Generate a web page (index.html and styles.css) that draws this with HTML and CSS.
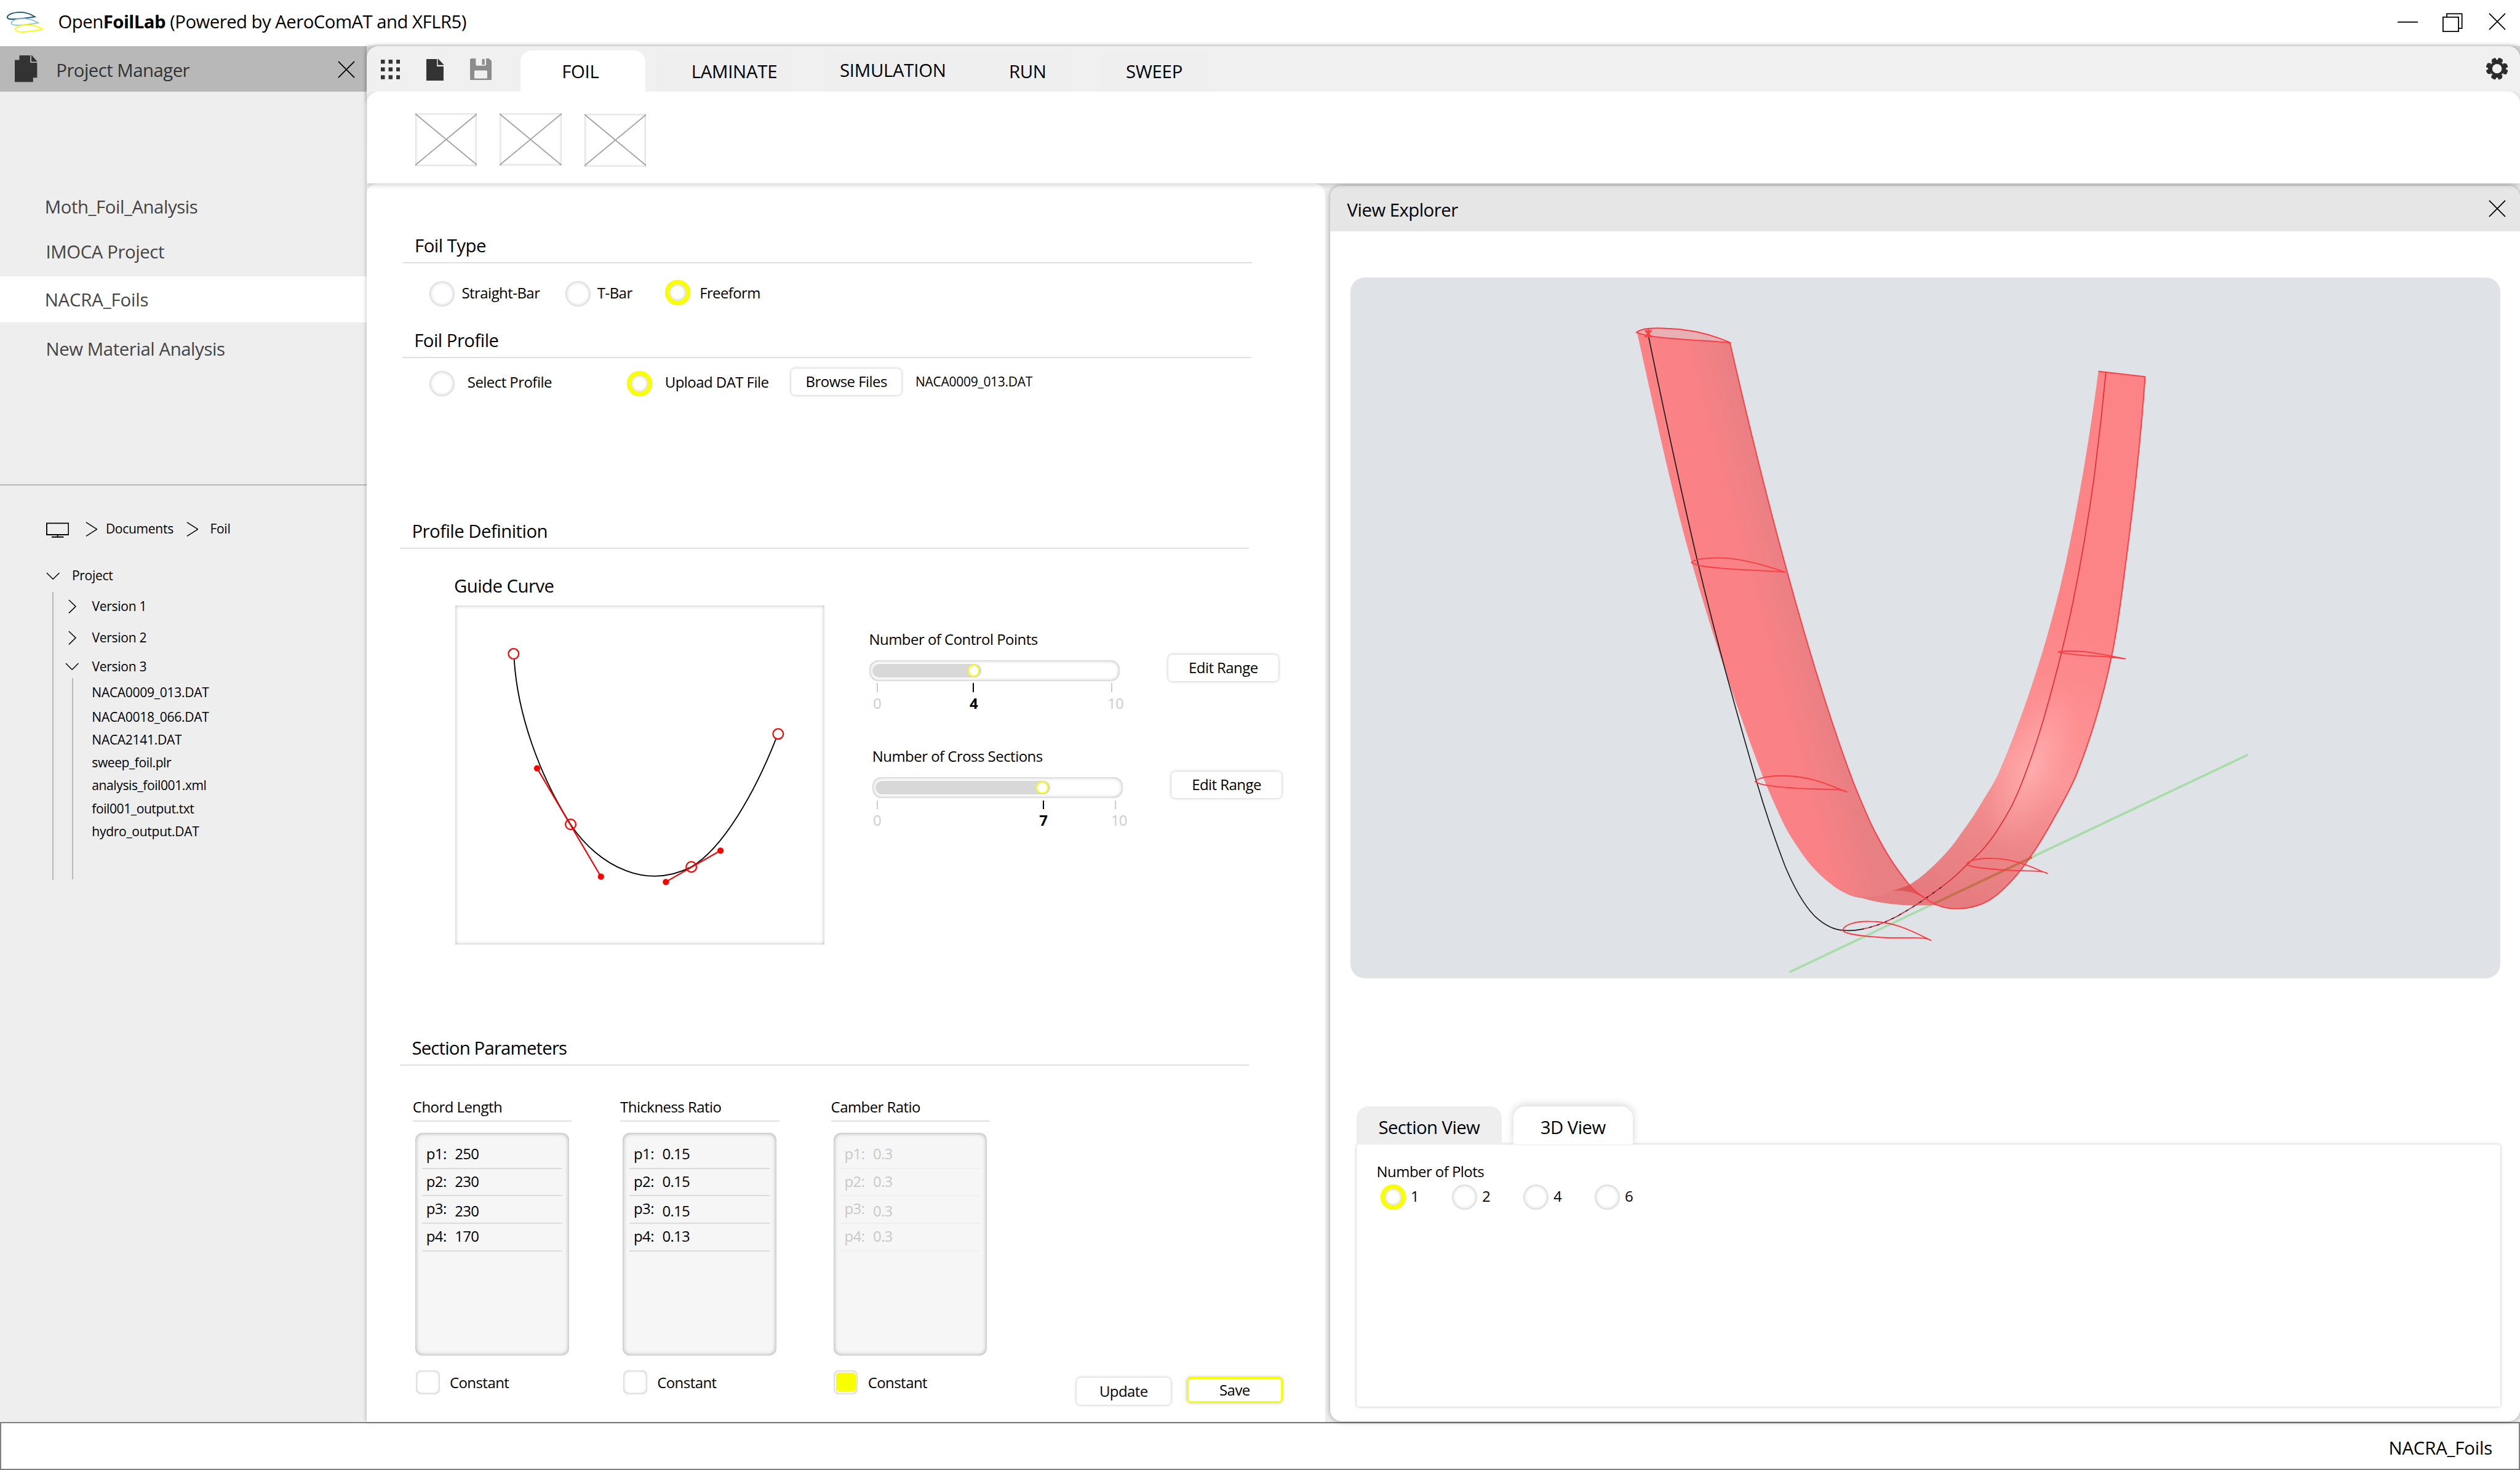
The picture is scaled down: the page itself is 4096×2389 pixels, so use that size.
FILE: index.html
```html
<!DOCTYPE html>
<html lang="en">
<head>
<meta charset="utf-8">
<title>OpenFoilLab</title>
<link rel="stylesheet" href="styles.css">
</head>
<body>
<div class="window">
  <header class="titlebar">
    <svg class="logo" viewBox="0 0 66 38" fill="none" stroke-width="2">
      <path stroke="#0f5078" d="M50 9C41 3 34 1 25 1C12 1 2 5 2 10C3 15 16 13 25 12C35 11 43 10 50 9Z"/>
      <path stroke="#8cc3cf" d="M56 19.500C47 14 40 12 31 12C19 12 9 15 9 20C10 25 22 24 31 23C41 22 49 21 56 19.500Z"/>
      <path stroke="#faff00" d="M63 30.500C54 25 47 23 38 23C26 23 16 26 16 31C17 36 29 36 38 34.500C48 33 56 33 63 30.500Z"/>
    </svg>
    <h1 class="app-name">Open<b>FoilLab</b> (Powered by AeroComAT and XFLR5)</h1>
    <div class="window-controls">
      <svg class="ctl ctl-min" viewBox="0 0 36 36"><path d="M0 18H36"/></svg>
      <svg class="ctl ctl-restore" viewBox="0 0 36 36"><path d="M1 8.500H28V33.500H1ZM7.500 8V2.500H34V28H28.500"/></svg>
      <svg class="ctl ctl-close" viewBox="0 0 30 30"><path d="M1 1L29 29M29 1L1 29"/></svg>
    </div>
  </header>

  <div class="workspace">
    <aside class="sidebar">
      <div class="sidebar-head">
        <svg class="pages-icon" viewBox="0 0 39 48"><path fill="#333" d="M0 9H8V1H27V14H39V40H32V47.500H0ZM29 0L39.500 12H29Z"/></svg>
        <span class="sidebar-title">Project Manager</span>
        <svg class="ctl sidebar-close" viewBox="0 0 30 30"><path d="M1 1L29 29M29 1L1 29"/></svg>
      </div>
      <nav class="projects">
        <a class="project">Moth_Foil_Analysis</a>
        <a class="project inset">IMOCA Project</a>
        <a class="project active">NACRA_Foils</a>
        <a class="project inset last">New Material Analysis</a>
      </nav>
      <div class="files">
        <div class="breadcrumb">
          <svg class="monitor" viewBox="0 0 40 27"><path d="M1 1.500H39V21.500H1ZM20 22V25M9.500 25.500H30.500"/></svg>
          <svg class="crumb-arrow" viewBox="0 0 21 26"><path d="M1 1L20 13L1 25"/></svg>
          <span class="crumb">Documents</span>
          <svg class="crumb-arrow flush" viewBox="0 0 21 26"><path d="M1 1L20 13L1 25"/></svg>
          <span class="crumb last">Foil</span>
        </div>
        <div class="tree-root">
          <svg class="arrow-down" viewBox="0 0 24 13"><path d="M1 1L12 12L23 1"/></svg>
          <span>Project</span>
        </div>
        <div class="tree">
          <div class="branch"><span class="toggle"><svg class="arrow-right" viewBox="0 0 14 25"><path d="M1 1L13 12.500L1 24"/></svg></span>Version 1</div>
          <div class="branch second"><span class="toggle"><svg class="arrow-right" viewBox="0 0 14 25"><path d="M1 1L13 12.500L1 24"/></svg></span>Version 2</div>
          <div class="branch third"><span class="toggle"><svg class="arrow-down" viewBox="0 0 24 13"><path d="M1 1L12 12L23 1"/></svg></span>Version 3</div>
          <div class="leaves">
            <div class="leaf first">NACA0009_013.DAT</div>
            <div class="leaf">NACA0018_066.DAT</div>
            <div class="leaf">NACA2141.DAT</div>
            <div class="leaf lower">sweep_foil.plr</div>
            <div class="leaf lower">analysis_foil001.xml</div>
            <div class="leaf lower">foil001_output.txt</div>
            <div class="leaf">hydro_output.DAT</div>
          </div>
        </div>
      </div>
    </aside>

    <main class="main">
      <div class="tabstrip">
        <svg class="dots" viewBox="0 0 34 34" fill="#333"><path d="M0 0h7v7H0zM13.500 0h7v7h-7zM27 0h7v7h-7zM0 13.500h7v7H0zM13.500 13.500h7v7h-7zM27 13.500h7v7h-7zM0 27h7v7H0zM13.500 27h7v7h-7zM27 27h7v7h-7z"/></svg>
        <svg class="page-icon" viewBox="0 0 31 39"><path fill="#333" d="M0 1H18.500V14H30V39H0ZM20 0L31 11.500H20Z"/></svg>
        <svg class="save-icon" viewBox="0 0 38 38"><path fill="#8c8c8c" fill-rule="evenodd" d="M2 0H10V10.500Q10 12.500 12 12.500H26Q28 12.500 28 10.500V0H33L38 5V36Q38 38 36 38H2Q0 38 0 36V2Q0 0 2 0ZM9 21Q7.500 21 7.500 23V33.500Q7.500 35 9 35H28.500Q30 35 30 33.500V23Q30 21 28.500 21ZM21 1H25.500V11H21Z"/></svg>
        <div class="tab tab-foil">FOIL</div>
        <div class="tab tab-laminate">LAMINATE</div>
        <div class="tab tab-simulation">SIMULATION</div>
        <div class="tab tab-run">RUN</div>
        <div class="tab tab-sweep">SWEEP</div>
        <svg class="gear" viewBox="-20 -20 40 40"><g fill="#2b2b2b"><circle r="13"/><path d="M-9 -16Q-6 -19 -2.800 -19L-1 -15.500H1L2.800 -19Q6 -19 10 -16L9.500 -11L-9.500 -11Z"/><path d="M-9 -16Q-6 -19 -2.800 -19L-1 -15.500H1L2.800 -19Q6 -19 10 -16L9.500 -11L-9.500 -11Z" transform="rotate(90)"/><path d="M-9 -16Q-6 -19 -2.800 -19L-1 -15.500H1L2.800 -19Q6 -19 10 -16L9.500 -11L-9.500 -11Z" transform="rotate(180)"/><path d="M-9 -16Q-6 -19 -2.800 -19L-1 -15.500H1L2.800 -19Q6 -19 10 -16L9.500 -11L-9.500 -11Z" transform="rotate(270)"/></g><circle r="8.300" fill="#f0f0f0"/></svg>
      </div>
      <div class="ribbon">
        <div class="tool"><svg viewBox="0 0 108 92" preserveAspectRatio="none"><path d="M0 1L108 91M108 1L0 91"/></svg></div>
        <div class="tool up"><svg viewBox="0 0 108 92" preserveAspectRatio="none"><path d="M0 1L108 91M108 1L0 91"/></svg></div>
        <div class="tool down"><svg viewBox="0 0 108 92" preserveAspectRatio="none"><path d="M0 1L108 91M108 1L0 91"/></svg></div>
      </div>

      <div class="panes">
        <section class="editor">
          <h2 class="heading foil-type">Foil Type</h2>
          <div class="options types">
            <label class="option straight"><i class="radio"></i>Straight-Bar</label>
            <label class="option tbar"><i class="radio"></i>T-Bar</label>
            <label class="option freeform"><i class="radio on"></i>Freeform</label>
          </div>
          <h2 class="heading foil-profile">Foil Profile</h2>
          <div class="options sources">
            <label class="option select"><i class="radio"></i>Select Profile</label>
            <label class="option upload"><i class="radio on"></i>Upload DAT File</label>
            <button class="btn browse">Browse Files</button>
            <span class="filename">NACA0009_013.DAT</span>
          </div>

          <h2 class="heading definition">Profile Definition</h2>
          <div class="profile">
            <figure class="guide">
              <figcaption>Guide Curve</figcaption>
              <div class="plot">
                <svg viewBox="794.300 1056 643.700 592" fill="none">
                  <path stroke="#000" stroke-width="2" d="M897 1150C903 1245 940 1350 995.500 1438C1045 1512 1128 1552 1206 1512C1262 1479 1318 1380 1354 1288"/>
                  <g stroke="#f00" stroke-width="2.400">
                    <path d="M937 1340L1048.400 1529M1161.700 1538L1257 1483.500"/>
                    <circle cx="896" cy="1140.300" r="9"/><circle cx="1357.500" cy="1280" r="9"/>
                    <circle cx="995.500" cy="1437.700" r="9"/><circle cx="1206" cy="1512" r="9"/>
                  </g>
                  <g fill="#f00">
                    <circle cx="937" cy="1340" r="5.500"/><circle cx="1048.400" cy="1529" r="5.500"/>
                    <circle cx="1161.700" cy="1538.200" r="5.500"/><circle cx="1257" cy="1483.500" r="5.500"/>
                  </g>
                </svg>
              </div>
            </figure>
            <div class="sliders">
              <div class="slider-row">
                <div class="slider control-points">
                  <div class="slider-label">Number of Control Points</div>
                  <div class="track"><div class="fill"><i class="knob"></i></div></div>
                  <div class="scale"><span class="mark zero">0</span><span class="mark current">4</span><span class="mark max">10</span></div>
                </div>
                <button class="btn edit">Edit Range</button>
              </div>
              <div class="slider-row shifted">
                <div class="slider cross-sections">
                  <div class="slider-label">Number of Cross Sections</div>
                  <div class="track"><div class="fill"><i class="knob"></i></div></div>
                  <div class="scale"><span class="mark zero">0</span><span class="mark current">7</span><span class="mark max">10</span></div>
                </div>
                <button class="btn edit">Edit Range</button>
              </div>
            </div>
          </div>

          <h2 class="heading parameters">Section Parameters</h2>
          <div class="params">
            <div class="param chord">
              <h3>Chord Length</h3>
              <div class="list">
                <div class="row"><span>p1:</span><b>250</b></div>
                <div class="row"><span>p2:</span><b>230</b></div>
                <div class="row"><span>p3:</span><b class="low">230</b></div>
                <div class="row"><span>p4:</span><b>170</b></div>
              </div>
              <label class="constant"><i class="check"></i>Constant</label>
            </div>
            <div class="param thickness">
              <h3>Thickness Ratio</h3>
              <div class="list">
                <div class="row"><span>p1:</span><b>0.15</b></div>
                <div class="row"><span>p2:</span><b>0.15</b></div>
                <div class="row"><span>p3:</span><b class="low">0.15</b></div>
                <div class="row"><span>p4:</span><b>0.13</b></div>
              </div>
              <label class="constant"><i class="check"></i>Constant</label>
            </div>
            <div class="param camber">
              <h3>Camber Ratio</h3>
              <div class="list disabled">
                <div class="row"><span>p1:</span><b>0.3</b></div>
                <div class="row"><span>p2:</span><b>0.3</b></div>
                <div class="row"><span>p3:</span><b class="low">0.3</b></div>
                <div class="row"><span>p4:</span><b>0.3</b></div>
              </div>
              <label class="constant"><i class="check on"></i>Constant</label>
            </div>
            <div class="actions">
              <button class="btn update">Update</button>
              <button class="btn save">Save</button>
            </div>
          </div>
        </section>

        <section class="explorer">
          <header class="explorer-head">
            <h2>View Explorer</h2>
            <svg class="ctl ctl-close" viewBox="0 0 30 30"><path d="M1 1L29 29M29 1L1 29"/></svg>
          </header>
          <div class="viewport">
            <svg viewBox="2356 484 2006 1222" fill="none">
              <defs>
                <linearGradient id="bladeLeft" gradientUnits="userSpaceOnUse" x1="2856" y1="580" x2="3008" y2="538">
                  <stop offset="0" stop-color="#fb8185"/><stop offset=".45" stop-color="#f98286"/><stop offset="1" stop-color="#e77f83"/>
                </linearGradient>
                <linearGradient id="bladeRight" gradientUnits="userSpaceOnUse" x1="3640" y1="1080" x2="3440" y2="1585">
                  <stop offset="0" stop-color="#fc8386"/><stop offset=".3" stop-color="#fd8e91"/><stop offset=".52" stop-color="#fb9799"/><stop offset=".74" stop-color="#ee888b"/><stop offset="1" stop-color="#e57b7f"/>
                </linearGradient>
                <radialGradient id="shine" gradientUnits="userSpaceOnUse" cx="0" cy="0" r="1" gradientTransform="translate(3545 1338) rotate(-68) scale(150 60)">
                  <stop offset="0" stop-color="#ffb0b2" stop-opacity=".85"/><stop offset="1" stop-color="#ffa5a7" stop-opacity="0"/>
                </radialGradient>
                <path id="right" d="M3660.800 647.700L3742.300 657C3735 761 3723.500 866 3710 970C3702 1029 3696 1088 3683.500 1146C3669 1214 3650 1282 3622.800 1350C3612 1377 3597 1402 3581.600 1430C3571 1449 3559 1470 3545 1490C3531 1511 3517 1530 3499 1547C3484 1562 3469 1574 3450.800 1579C3438 1583 3425 1585.500 3412 1585C3400 1584 3390 1582 3378 1578.700C3350 1579 3330 1580 3315 1578.300C3290 1576 3270 1573 3250 1567L3227.800 1561.700C3262 1568 3280 1563 3300 1554C3314 1550 3322 1547 3332 1542.700C3341 1537 3350 1531 3358.700 1523.300C3379 1505 3397 1487 3412 1466.700C3426 1447 3441 1427 3453 1406.700C3464 1388 3476 1371 3486 1350C3516 1281 3541.500 1208 3563.200 1137C3578 1088 3592 1035 3603.300 984.300C3627 874 3646 760 3660.800 647.700Z"/>
              </defs>
              <path stroke="#a8dca8" stroke-width="4" d="M3122 1695.500L3921.500 1316.500"/>
              <path fill="url(#bladeLeft)" d="M2856 580L3018 598C3048.600 731 3081 865 3118 998C3150 1115 3184.700 1233 3227.800 1350C3238 1378 3250 1405 3261.700 1431.700C3270 1450 3280 1468 3290.800 1486.700C3303 1507 3316 1525 3329.600 1541.700C3340 1555 3350 1561 3358.700 1566.700C3338 1563 3322 1550 3300 1554C3280 1566 3250 1570 3227.800 1561.700C3212 1555 3203 1549 3193.900 1541.700C3170 1523 3152 1503 3138 1480C3122 1458 3111 1437 3100.800 1413.300C3091 1392 3082 1371 3073.700 1350C3027 1227 2986 1103 2951 980C2913 846 2886 713 2856 580Z"/>
              <use href="#right" fill="url(#bladeRight)"/>
              <use href="#right" fill="url(#shine)"/>
              <path fill="#dc5558" d="M3300 1554C3314 1550 3322 1547 3332 1542.700C3340 1552 3348 1560 3358.700 1567C3340 1558 3330 1552 3300 1554Z"/>
              <path stroke="#c2714a" stroke-width="4" d="M3374 1576L3545 1495"/>
              <path stroke="#1a1a1a" stroke-width="1.800" d="M2876 586.700C2903 718 2931 849 2961.700 980C2991 1103 3025 1227 3060.600 1350C3077 1407 3094 1458 3113.900 1510C3131 1551 3148 1579 3165 1597C3180 1611 3196 1622 3215.700 1622.500C3227 1624 3237 1623 3247 1621"/>
              <path stroke="#d93038" stroke-width="1.800" d="M3247 1621C3262 1618 3276 1614 3288.400 1608.300C3299 1603 3307 1600 3315 1595C3332 1585 3346 1577 3358.700 1567.300C3370 1560 3380 1552 3387.800 1546.700C3405 1534 3419 1521 3431.400 1508.300C3443 1498 3452 1490 3460.500 1480C3472 1467 3481 1454 3489.500 1440C3498 1427 3503 1418 3509 1406.700C3518 1389 3526 1370 3533 1350C3544 1321 3554 1292 3563 1261.700C3583.500 1191 3602 1120 3616.700 1049C3631 978 3643 907 3652.800 836C3661 773 3668 711 3674 648"/>
              <path stroke="#222" stroke-width="1.600" stroke-dasharray="5 9" d="M3247 1621C3262 1618 3276 1614 3288.400 1608.300C3299 1603 3307 1600 3315 1595C3332 1585 3346 1577 3358.700 1567.300C3370 1560 3380 1552 3387.800 1546.700"/>
              <g stroke="#fb3c41" stroke-width="2" stroke-linejoin="round">
                <path d="M3018 598C3048.600 731 3081 865 3118 998C3150 1115 3184.700 1233 3227.800 1350C3238 1378 3250 1405 3261.700 1431.700C3270 1450 3280 1468 3290.800 1486.700C3303 1507 3316 1525 3329.600 1541.700C3340 1555 3350 1561 3358.700 1566.700C3367 1573 3375 1577 3382.900 1580C3393 1584 3402 1585 3412 1585C3425 1585.500 3438 1583 3450.800 1579C3469 1574 3484 1562 3499 1547C3517 1530 3531 1511 3545 1490C3559 1470 3571 1449 3581.600 1430C3597 1402 3612 1377 3622.800 1350C3650 1282 3669 1214 3683.500 1146C3696 1088 3702 1029 3710 970C3723.500 866 3735 761 3742.300 657L3660.800 647.700"/>
                <path fill="#e6b0b5" d="M2854.700 580C2862 573 2885 571.500 2908 572.800C2950 574 2990 585 3019 597.800C2990 595 2965 594 2941.600 592.200C2905 590 2870 586 2854.700 580Z"/>
                <path d="M2951 981.500C2955 975 2978 972.500 3001.800 973C3040 974 3080 986 3114 998C3095 996 3060 995 3021.800 992.600C2990 990 2960 988 2951 981.500Z"/>
                <path d="M3062 1363.300C3066 1356 3092 1352 3116 1353.300C3160 1354 3190 1369 3222 1381.300C3215 1377 3204 1377 3189 1376.700C3170 1376 3150 1376 3130.900 1374.700C3100 1372 3070 1370 3062 1363.300Z"/>
                <path d="M3214.700 1622.700C3217 1612 3240 1606 3264 1607.300C3305 1607 3340 1626 3368.400 1640C3362 1636 3352 1636 3339.300 1635.700C3320 1636 3300 1636 3286 1635.300C3250 1633 3218 1630 3214.700 1622.700Z"/>
                <path d="M3431.400 1507.300C3434 1500 3455 1496.500 3475 1497.300C3515 1497 3545 1513 3572 1523.700C3566 1519 3550 1519 3538 1519C3520 1519 3500 1518 3484.700 1516.700C3455 1514 3434 1512 3431.400 1507.300Z"/>
                <path d="M3591 1137C3605 1134.500 3630 1136 3643.400 1137.500C3670 1141 3685 1145 3707.600 1149C3685 1146 3660 1144 3636.700 1143.400C3620 1142 3600 1140 3591 1137Z"/>
                <path stroke-width="3" d="M2870 576L2881 588M2881 576L2870 588M2875.500 574V589"/>
              </g>
            </svg>
          </div>
          <div class="view-tabs">
            <div class="view-tab">Section View</div>
            <div class="view-tab current">3D View</div>
          </div>
          <div class="view-panel">
            <div class="plots-label">Number of Plots</div>
            <div class="plots">
              <label class="option"><i class="radio on"></i>1</label>
              <label class="option"><i class="radio"></i>2</label>
              <label class="option"><i class="radio"></i>4</label>
              <label class="option"><i class="radio"></i>6</label>
            </div>
          </div>
        </section>
      </div>
    </main>
  </div>

  <footer class="statusbar">NACRA_Foils</footer>
</div>
</body>
</html>
```
FILE: styles.css
```css
/* 43.96rem spans the full window width */
html {
  font-size: 93.1756px;
}

* {
  box-sizing: border-box;
}

body {
  margin: 0;
  overflow: hidden;
  background: #fff;
  color: #000;
  font-family: "Open Sans", "Noto Sans", sans-serif;
  font-size: 0.315rem;
  line-height: 0.44rem;
  letter-spacing: -0.018em;
  white-space: nowrap;
}

h1, h2, h3, figure {
  margin: 0;
  font-size: inherit;
  font-weight: 400;
}

svg {
  display: block;
  flex: none;
}

.window {
  display: flex;
  flex-direction: column;
  width: 43.96rem;
  height: 25.64rem;
}

.ctl {
  fill: none;
  stroke: #000;
  stroke-width: 1.9;
}

/* Title bar */
.titlebar {
  display: flex;
  align-items: center;
  height: 0.8rem;
  padding: 0 0.25rem 0 0.105rem;
}

.logo {
  width: 0.66rem;
  height: 0.38rem;
  margin-top: -0.02rem;
}

.app-name {
  margin: -0.035rem 0 0 0.25rem;
}

.window-controls {
  display: flex;
  align-items: center;
  margin-left: auto;
  margin-top: -0.04rem;
}

.ctl-min {
  width: 0.36rem;
  height: 0.36rem;
}

.ctl-restore {
  width: 0.36rem;
  height: 0.36rem;
  margin: 0.02rem 0.44rem 0 0.43rem;
}

.ctl-close {
  width: 0.3rem;
  height: 0.3rem;
}

.workspace {
  display: flex;
  height: 24rem;
}

/* Project manager */
.sidebar {
  width: 6.4rem;
  flex: none;
  background: #eee;
}

.sidebar-head {
  display: flex;
  align-items: center;
  height: 0.8rem;
  padding: 0 0.21rem 0 0.26rem;
  background: #b8b8b8;
  color: #333;
}

.pages-icon {
  width: 0.39rem;
  height: 0.48rem;
}

.sidebar-title {
  margin: 0.06rem 0 0 0.33rem;
}

.sidebar-close {
  width: 0.3rem;
  height: 0.3rem;
  margin: 0.03rem 0 0 auto;
}

.projects {
  display: flex;
  flex-direction: column;
  height: 6.87rem;
  padding-top: 1.608rem;
  border-bottom: 2px solid #b8b8b8;
  color: #444;
  letter-spacing: -0.014em;
}

.project {
  height: 0.78rem;
  padding-left: 0.78rem;
  line-height: 0.8rem;
}

.project.inset {
  padding-left: 0.8rem;
}

.project.active {
  height: 0.8rem;
  margin-top: 0.052rem;
  line-height: 0.82rem;
  background: #fff;
  letter-spacing: -0.005em;
}

.project.last {
  margin-top: 0.068rem;
}

.files {
  padding-left: 0.8rem;
  font-size: 0.226rem;
  line-height: 0.42rem;
  letter-spacing: -0.014em;
}

.files svg {
  fill: none;
  stroke: #000;
  stroke-width: 1.6;
}

.breadcrumb {
  display: flex;
  align-items: center;
  height: 0.4rem;
  margin-top: 0.556rem;
}

.files .monitor {
  width: 0.4rem;
  height: 0.27rem;
  margin-top: 0.04rem;
  stroke-width: 2;
}

.crumb-arrow {
  width: 0.21rem;
  height: 0.26rem;
  margin: 0.02rem 0 0 0.29rem;
}

.crumb-arrow.flush {
  margin-left: 0;
}

.crumb {
  width: 1.405rem;
  margin-left: 0.145rem;
}

.crumb.last {
  margin-left: 0.205rem;
}

.tree-root {
  display: flex;
  align-items: center;
  gap: 0.215rem;
  height: 0.4rem;
  margin: 0.419rem 0 0.085rem;
}

.arrow-down {
  width: 0.24rem;
  height: 0.13rem;
}

.arrow-right {
  width: 0.14rem;
  height: 0.25rem;
}

.tree {
  height: 5.013rem;
  margin-left: 0.108rem;
  padding-top: 0.052rem;
  border-left: 2px solid #b8b8b8;
}

.branch {
  display: flex;
  align-items: center;
  height: 0.4rem;
  padding-left: 0.212rem;
}

.branch.second {
  margin-top: 0.144rem;
}

.branch.third {
  margin-top: 0.099rem;
}

.toggle {
  display: flex;
  justify-content: center;
  width: 0.24rem;
  margin-right: 0.223rem;
}

.leaves {
  height: 3.518rem;
  margin-left: 0.322rem;
  padding: 0.051rem 0 0 0.33rem;
  border-left: 2px solid #b8b8b8;
}

.leaf {
  height: 0.4rem;
}

.leaf.first {
  margin-bottom: 0.02rem;
}

.leaf.lower {
  letter-spacing: -0.02em;
}

/* Tab strip and ribbon */
.main {
  position: relative;
  display: flex;
  flex-direction: column;
  width: 37.56rem;
  background: linear-gradient(#d4d4d4 1.4rem, #ececec 2rem);
  box-shadow: -1px 0 6px rgba(0, 0, 0, 0.22);
}

.tabstrip {
  display: flex;
  align-items: flex-start;
  height: 1rem;
  margin-bottom: -0.2rem;
  border-radius: 0.2rem 0.2rem 0 0;
  background: #f0f0f0;
  box-shadow: 0 -1px 6px rgba(0, 0, 0, 0.2);
}

.dots {
  width: 0.34rem;
  height: 0.34rem;
  margin: 0.24rem 0 0 0.24rem;
}

.page-icon {
  width: 0.31rem;
  height: 0.39rem;
  margin: 0.215rem 0 0 0.455rem;
}

.save-icon {
  width: 0.38rem;
  height: 0.38rem;
  margin: 0.22rem 0 0 0.455rem;
}

.tab {
  height: 0.72rem;
  margin-top: 0.08rem;
  border-radius: 0.2rem 0.2rem 0 0;
  background: #efefef;
  line-height: 0.74rem;
  letter-spacing: -0.009em;
}

.tab-foil {
  width: 2.18rem;
  margin-left: 0.496rem;
  padding-left: 0.725rem;
  background: #fff;
}

.tab-laminate {
  width: 2.38rem;
  margin-left: 0.185rem;
  padding-left: 0.62rem;
}

.tab-simulation {
  width: 2.18rem;
  margin-left: 0.53rem;
  padding-left: 0.3rem;
  border-top-right-radius: 0;
  line-height: 0.7rem;
}

.tab-run {
  width: 2.18rem;
  padding-left: 1.07rem;
  border-top-left-radius: 0;
}

.tab-sweep {
  width: 1.91rem;
  margin-left: 0.49rem;
  padding-left: 0.44rem;
}

.gear {
  width: 0.4rem;
  height: 0.4rem;
  margin: 0.2rem 0.2rem 0 auto;
}

.ribbon {
  position: relative;
  z-index: 1;
  display: flex;
  align-items: flex-start;
  gap: 0.396rem;
  height: 1.6rem;
  padding: 0.38rem 0 0 0.84rem;
  border-radius: 0.2rem 0.2rem 0 0;
  background: #fff;
  clip-path: inset(0 0 -0.2rem 0);
  box-shadow: 0 2px 8px rgba(0, 0, 0, 0.2);
}

.tool {
  width: 1.08rem;
  height: 0.915rem;
  box-shadow: inset 0 0 5px rgba(0, 0, 0, 0.28);
}

.tool.up {
  margin-top: -0.01rem;
}

.tool.down {
  margin-top: 0.01rem;
}

.tool svg {
  width: 100%;
  height: 100%;
  stroke: #a4a4a4;
  stroke-width: 2;
}

.panes {
  display: flex;
  justify-content: space-between;
  height: 21.6rem;
}

/* Foil editor */
.editor {
  width: 16.72rem;
  padding-top: 0.858rem;
  border-radius: 0.2rem 0.2rem 0 0;
  background: #fff;
  font-size: 0.257rem;
}

.heading {
  width: 14.81rem;
  height: 0.532rem;
  padding-left: 0.205rem;
  border-bottom: 2px solid #e0e0e0;
  font-size: 0.315rem;
  line-height: 0.47rem;
}

.foil-type {
  margin-left: 0.63rem;
}

.foil-profile {
  margin-left: 0.62rem;
}

.definition {
  margin: 1.963rem 0 0 0.58rem;
}

.parameters {
  margin-left: 0.58rem;
  letter-spacing: -0.028em;
}

.options {
  display: flex;
  align-items: center;
  padding-left: 1.095rem;
}

.types {
  height: 1.123rem;
  padding-bottom: 0.1rem;
}

.sources {
  height: 0.83rem;
}

.option {
  display: flex;
  align-items: center;
}

.radio {
  flex: none;
  width: 0.44rem;
  height: 0.44rem;
  margin: 0.04rem 0.12rem 0 0;
  border-radius: 50%;
  background: #fff;
  box-shadow: inset 0 0 6px rgba(0, 0, 0, 0.3);
}

.radio.on {
  border: 0.08rem solid #faff00;
  box-shadow: inset 0 0 5px rgba(0, 0, 0, 0.28), 0 0 1px rgba(120, 120, 0, 0.4);
}

.straight {
  width: 2.365rem;
}

.tbar {
  width: 1.74rem;
}

.freeform {
  letter-spacing: -0.025em;
}

.freeform .radio {
  margin: 0 0.165rem 0 0;
}

.select {
  width: 3.445rem;
}

.select .radio,
.upload .radio {
  margin: 0.07rem 0.22rem 0 0;
}

.upload {
  width: 2.865rem;
}

.btn {
  flex: none;
  width: 1.92rem;
  height: 0.466rem;
  padding: 0 0 0.02rem;
  border: 0;
  border-radius: 0.07rem;
  background: #fff;
  box-shadow: 0 0 5px rgba(0, 0, 0, 0.28);
  color: #000;
  font: inherit;
  letter-spacing: inherit;
  line-height: 0.42rem;
}

.filename {
  margin-left: 0.245rem;
  font-size: 0.226rem;
  letter-spacing: -0.014em;
}

.profile {
  display: flex;
  height: 8.488rem;
  padding-left: 1.51rem;
}

.guide {
  width: 7.25rem;
  padding-top: 0.433rem;
}

.guide figcaption {
  padding-left: 0.01rem;
  font-size: 0.315rem;
}

.plot {
  width: 6.437rem;
  height: 5.92rem;
  margin: 0.117rem 0 0 0.033rem;
  box-shadow: inset 0 0 6px rgba(0, 0, 0, 0.3);
}

.plot svg {
  width: 100%;
  height: 100%;
}

.sliders {
  padding-top: 1.389rem;
}

.slider-row {
  display: flex;
  height: 2.04rem;
}

.slider-row.shifted {
  margin-left: 0.056rem;
}

.slider-row .btn {
  margin-top: 0.459rem;
}

.slider {
  width: 5.22rem;
}

.slider-label {
  height: 0.36rem;
  line-height: 0.38rem;
  letter-spacing: -0.021em;
}

.track {
  width: 4.376rem;
  height: 0.36rem;
  margin-top: 0.2rem;
  padding: 0.06rem;
  border-radius: 0.16rem;
  box-shadow: inset 0 0 6px rgba(0, 0, 0, 0.34);
}

.fill {
  display: flex;
  justify-content: flex-end;
  align-items: center;
  height: 0.24rem;
  padding-right: 0.03rem;
  border-radius: 0.12rem;
  background: #d8d8d8;
}

.control-points .fill {
  width: 1.9rem;
}

.cross-sections .fill {
  width: 3.04rem;
}

.knob {
  width: 0.21rem;
  height: 0.21rem;
  border: 2px solid #faff00;
  border-radius: 50%;
  background: #fff;
}

.scale {
  display: flex;
  margin: 0.04rem 0 0 -0.06rem;
  color: #ccc;
}

.cross-sections .scale {
  margin-left: -0.116rem;
}

.mark {
  width: 0.4rem;
  line-height: 0.38rem;
  text-align: center;
}

.mark::before {
  content: "";
  display: block;
  width: 2px;
  height: 0.16rem;
  margin: 0 auto;
  background: currentColor;
}

.mark.current {
  margin-left: 1.284rem;
  color: #000;
  font-weight: 700;
}

.mark.max {
  margin-left: 2.014rem;
  padding-left: 0.12rem;
  text-align: left;
}

.mark.max::before {
  margin-left: 0.07rem;
}

.cross-sections .current {
  margin-left: 2.5rem;
}

.cross-sections .max {
  margin-left: 0.86rem;
}

.params {
  display: flex;
  height: 6.21rem;
  padding: 0.535rem 0 0 0.8rem;
}

.param {
  width: 2.776rem;
}

.thickness {
  margin-left: 0.844rem;
}

.camber {
  margin-left: 0.9rem;
}

.param h3 {
  height: 0.445rem;
  border-bottom: 2px solid #e0e0e0;
  line-height: 0.37rem;
}

.list {
  width: 2.68rem;
  height: 3.88rem;
  margin: 0.19rem 0 0 0.045rem;
  padding: 0.15rem 0.115rem;
  border-radius: 0.13rem;
  background: #f6f6f6;
  box-shadow: inset 0 0 7px rgba(0, 0, 0, 0.36);
}

.row {
  display: flex;
  height: 0.48rem;
  padding-left: 0.075rem;
  border-bottom: 2px solid #dcdcdc;
  line-height: 0.43rem;
}

.row span {
  width: 0.5rem;
}

.row b {
  font-weight: 400;
  letter-spacing: -0.03em;
}

.row .low {
  padding-top: 0.04rem;
}

.list.disabled {
  color: #c8c8c8;
}

.disabled .row {
  border-color: #f0f0f0;
}

.constant {
  display: flex;
  align-items: center;
  height: 0.42rem;
  margin: 0.26rem 0 0 0.05rem;
}

.check {
  width: 0.42rem;
  height: 0.42rem;
  margin-right: 0.175rem;
  padding: 0.04rem;
  border-radius: 0.09rem;
  box-shadow: inset 0 0 5px rgba(0, 0, 0, 0.32);
}

.check.on::before {
  content: "";
  display: block;
  height: 100%;
  border-radius: 0.06rem;
  background: #faff00;
}

.actions {
  display: flex;
  align-items: flex-end;
  margin-left: 1.508rem;
  padding-bottom: 0.3rem;
}

.update {
  width: 1.645rem;
}

.save {
  width: 1.68rem;
  height: 0.46rem;
  margin: 0 0 0.025rem 0.275rem;
  border: 3px solid #faff00;
  line-height: 0.38rem;
}

/* View explorer */
.explorer {
  width: 20.76rem;
  height: 21.55rem;
  margin-top: 0.04rem;
  border-radius: 0.2rem;
  background: #fff;
  box-shadow: 0 0 7px rgba(0, 0, 0, 0.36);
}

.explorer-head {
  display: flex;
  align-items: center;
  justify-content: space-between;
  height: 0.8rem;
  padding: 0 0.25rem 0 0.3rem;
  border-radius: 0.2rem 0.2rem 0 0;
  background: #e6e6e6;
}

.explorer-head h2 {
  padding-top: 0.06rem;
}

.viewport {
  width: 20.06rem;
  height: 12.22rem;
  margin: 0.8rem 0 0 0.36rem;
  border-radius: 0.25rem;
  background: #dfe2e7;
}

.viewport svg {
  width: 100%;
  height: 100%;
}

.view-tabs {
  display: flex;
  gap: 0.2rem;
  margin: 2.24rem 0 0 0.46rem;
  height: 0.66rem;
}

.view-tab {
  width: 2.54rem;
  padding-top: 0.065rem;
  border-radius: 0.2rem 0.2rem 0 0;
  background: #eee;
  line-height: 0.62rem;
  text-align: center;
  letter-spacing: -0.02em;
}

.view-tab.current {
  width: 2.08rem;
  background: #fff;
  box-shadow: 0 -2px 14px rgba(0, 0, 0, 0.18);
  clip-path: inset(-0.3rem -0.3rem -0.02rem -0.3rem);
  position: relative;
  z-index: 1;
}

.view-panel {
  width: 19.96rem;
  height: 4.58rem;
  margin-left: 0.46rem;
  padding: 0.29rem 0 0 0.355rem;
  border-radius: 0.04rem;
  background: #fff;
  box-shadow: 0 0 5px rgba(0, 0, 0, 0.26);
  font-size: 0.257rem;
}

.plots-label {
  line-height: 0.36rem;
  letter-spacing: -0.022em;
}

.plots {
  display: flex;
  margin: 0.05rem 0 0 0.065rem;
  line-height: 0.41rem;
}

.plots .option {
  width: 1.245rem;
  align-items: flex-start;
}

.plots .radio {
  margin: 0 0.09rem 0 0;
}

/* Status bar */
.statusbar {
  height: 0.84rem;
  padding: 0.04rem 0.46rem 0 0;
  border: 2px solid #808080;
  background: #fff;
  line-height: 0.8rem;
  text-align: right;
  letter-spacing: -0.005em;
}
```
